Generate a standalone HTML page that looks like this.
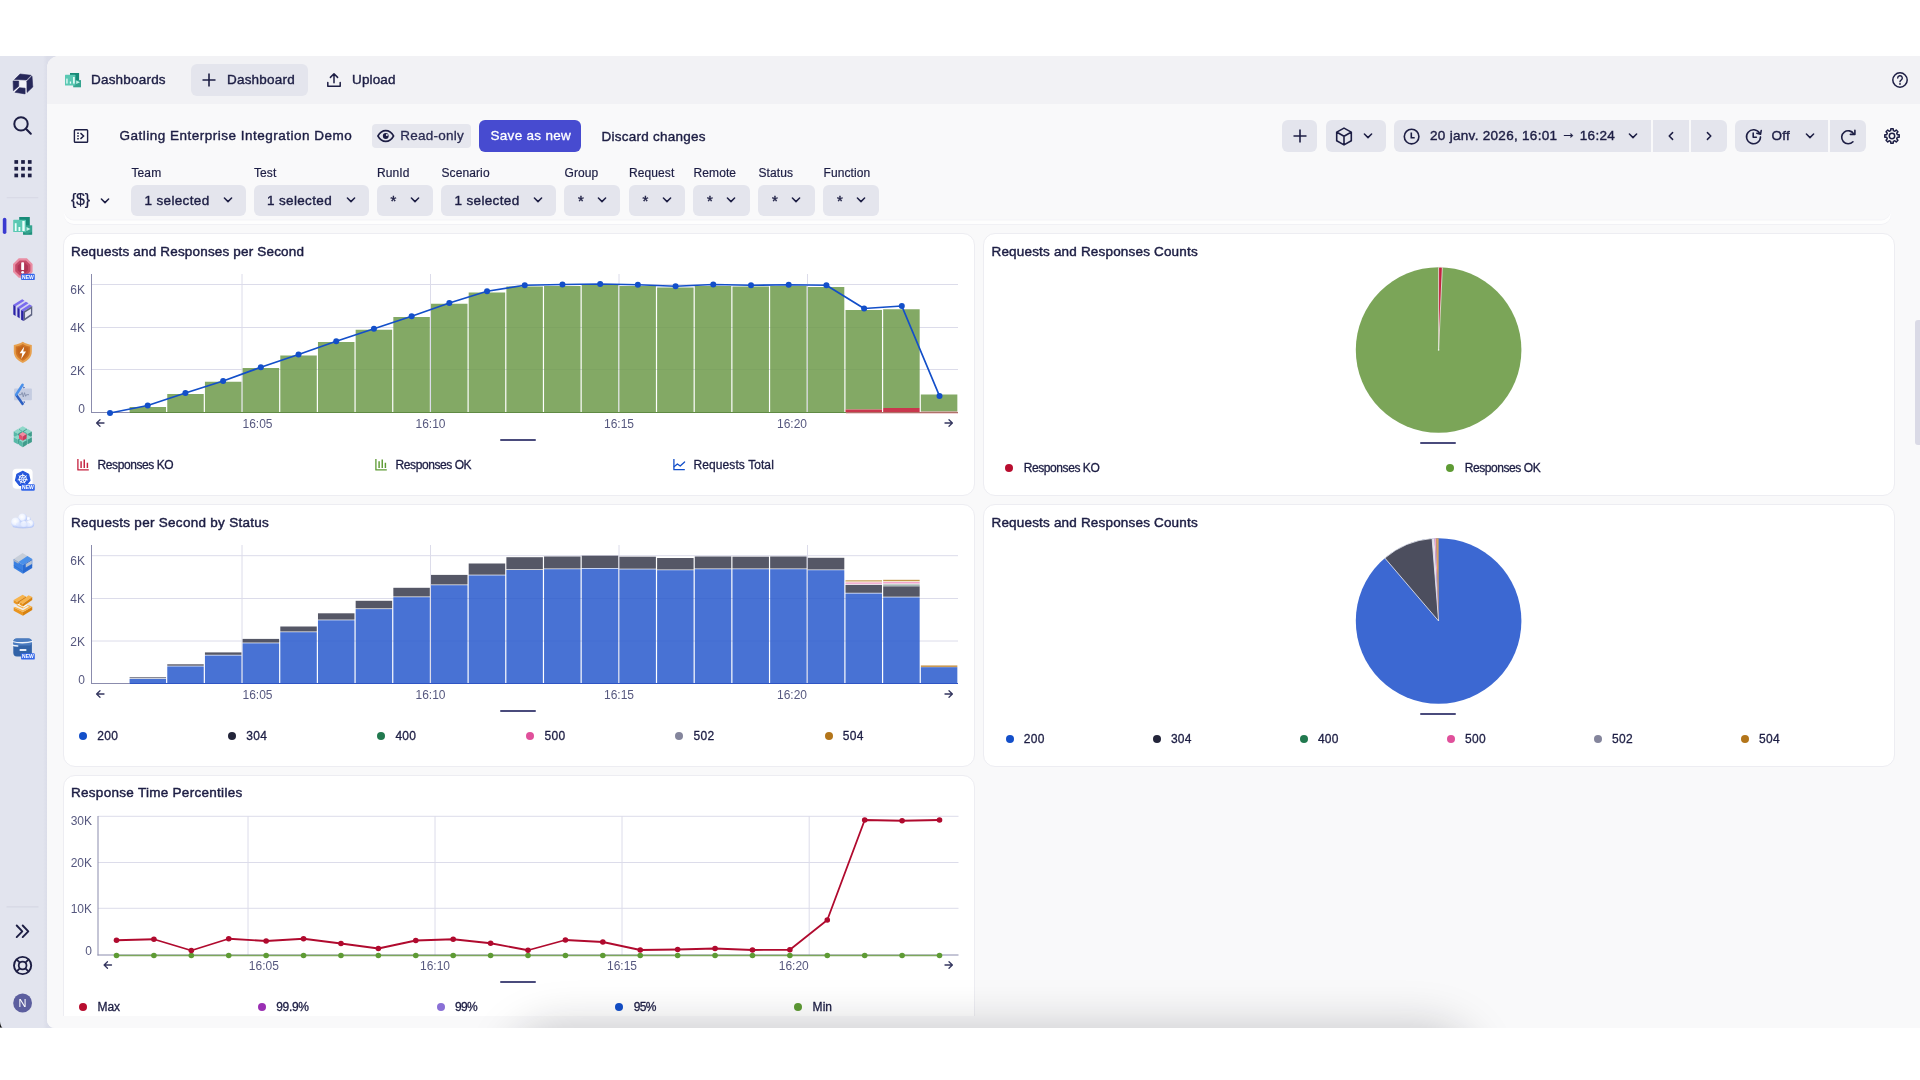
<!DOCTYPE html>
<html lang="fr"><head><meta charset="utf-8"><title>Gatling Enterprise Integration Demo - Dashboards</title>
<style>
*{box-sizing:border-box;margin:0;padding:0}
html,body{width:1920px;height:1080px;overflow:hidden;background:#fff}
body{position:relative;font-family:"Liberation Sans",sans-serif;color:#1d1e44;font-size:14px;-webkit-font-smoothing:antialiased}
.abs{position:absolute}
#app{position:absolute;left:0;top:56px;width:1920px;height:971.5px;background:linear-gradient(90deg,#e2e4ee 0,#e2e4ee 43px,#dbdde9 47px);overflow:hidden}
#main{position:absolute;left:47px;top:0;width:1873px;height:971.5px;background:#f9f9fa;border-radius:12px 0 0 8px;overflow:hidden}
#tabbar{position:absolute;left:0;top:0;width:1873px;height:48.2px;background:#f2f2f5}
.t14{position:absolute;font-size:13.5px;line-height:16px;letter-spacing:0.25px;white-space:pre;color:#1d1e44;-webkit-text-stroke:0.4px #1d1e44;margin-top:0.2px}
.t12{position:absolute;font-size:12px;line-height:14px;white-space:pre;color:#1d1e44;-webkit-text-stroke:0.2px #1d1e44}
.btn{position:absolute;background:#e4e5ed;border-radius:6px;height:32px}
.sel{position:absolute;top:184.8px;height:31.6px;background:#e4e5ed;border-radius:6px}
.card{position:absolute;background:#fff;border:1px solid #ededf2;border-radius:12px}
.ttl{position:absolute;font-weight:400;font-size:13.5px;line-height:16px;white-space:pre;color:#1d1e44;-webkit-text-stroke:0.45px #1d1e44}
.lg{position:absolute;font-size:12px;line-height:14px;white-space:pre;color:#1d1e44;-webkit-text-stroke:0.3px #1d1e44}
.dot{position:absolute;width:8px;height:8px;border-radius:50%}
.ind{position:absolute;width:36px;height:2px;background:#4a4b7c;border-radius:1px}
svg.ic{position:absolute;overflow:visible}
svg.plot{position:absolute;left:0;top:0;pointer-events:none}
#charts{position:absolute;left:0;top:0;width:1920px;height:1027px;overflow:hidden}
text.ax{font-family:"Liberation Sans",sans-serif;font-size:12px;fill:#56587f}
#root{position:absolute;left:0;top:0;width:1920px;height:1080px;overflow:hidden;will-change:transform;background:#fff}

</style></head>
<body>
<div id="root">
<div id="app">
  <div id="main">
    <div id="tabbar"></div>
  </div>
</div>

<!-- toolbar bottom edge -->
<div class="abs" style="left:64px;top:104px;width:1827px;height:120px;border-radius:0 0 10px 10px;background:#f9f9fa;box-shadow:inset 0 -3.5px 0 #fefefe, inset 0 -4.5px 0 #f4f4f7, 0 1px 0 #f1f1f5"></div>
<div class="abs" style="left:63px;top:104px;width:1832px;height:100px;background:#f9f9fa"></div>

<!-- cards -->
<div class="card" style="left:62.5px;top:233.4px;width:912px;height:262.6px"></div>
<div class="card" style="left:982.7px;top:233.4px;width:912px;height:262.6px"></div>
<div class="card" style="left:62.5px;top:504.3px;width:912px;height:262.7px"></div>
<div class="card" style="left:982.7px;top:504.3px;width:912px;height:262.7px"></div>
<div class="card" style="left:62.5px;top:774.8px;width:912px;height:262.2px"></div>

<!-- scrollbar -->
<div class="abs" style="left:1914.5px;top:320px;width:6px;height:125px;background:#dadae6;border-radius:3px 0 0 3px"></div>
<!-- ===== tab bar ===== -->
<svg class="ic" style="left:64px;top:71px" width="18" height="18" viewBox="0 0 18 18">
  <rect x="6" y="2" width="9.100" height="8.500" fill="#178a77"/>
  <rect x="9.200" y="9.100" width="7.800" height="7.200" fill="#35a48f"/>
  <rect x="1" y="3.800" width="10.400" height="10.600" rx="0.500" fill="#5ac8b3"/>
  <rect x="2.300" y="7.600" width="1.300" height="5" fill="#ecfffb"/>
  <rect x="5.800" y="10.500" width="1.300" height="2.100" fill="#ecfffb"/>
  <rect x="9.100" y="6" width="1.600" height="6.600" fill="#ecfffb"/>
  <path d="M12.200 9.500 L16 11.200 L12.200 12.900 Z" fill="#c4f1e7"/>
</svg>
<div class="t14" style="left:91px;top:72px;letter-spacing:0.20px">Dashboards</div>
<div class="btn" style="left:191px;top:64px;width:116.5px"></div>
<svg class="ic" style="left:200.7px;top:72px" width="16" height="16" viewBox="0 0 16 16"><path d="M8 1.500V14.500M1.500 8H14.500" stroke="#1d1e44" stroke-width="1.600" fill="none"/></svg>
<div class="t14" style="left:227px;top:72px;letter-spacing:0.20px">Dashboard</div>
<svg class="ic" style="left:325.5px;top:72px" width="16" height="16" viewBox="0 0 16 16"><path d="M8 10.8V2M4.4 5.4L8 1.8l3.6 3.6M1.8 10.6v3.6h12.4v-3.6" stroke="#1d1e44" stroke-width="1.5" fill="none" stroke-linecap="round" stroke-linejoin="round"/></svg>
<div class="t14" style="left:352px;top:72px;letter-spacing:0.15px">Upload</div>
<svg class="ic" style="left:1890.5px;top:71px" width="18" height="18" viewBox="0 0 18 18"><circle cx="9" cy="9" r="7.2" stroke="#1d1e44" stroke-width="1.5" fill="none"/><path d="M6.7 7.1a2.3 2.3 0 1 1 3.4 2c-.7.4-1.1.8-1.1 1.6" stroke="#1d1e44" stroke-width="1.4" fill="none" stroke-linecap="round"/><circle cx="9" cy="12.9" r="0.95" fill="#1d1e44"/></svg>

<!-- ===== toolbar row ===== -->
<svg class="ic" style="left:73px;top:127.7px" width="16" height="16" viewBox="0 0 16 16"><rect x="1.4" y="1.8" width="13.2" height="12.4" rx="0.8" stroke="#1d1e44" stroke-width="1.4" fill="none"/><path d="M5 5.2v.01M5 8v.01M5 10.8v.01" stroke="#1d1e44" stroke-width="1.6" stroke-linecap="square"/><path d="M8 5.6L10.6 8 8 10.4" stroke="#1d1e44" stroke-width="1.4" fill="none" stroke-linecap="square"/></svg>
<div class="t14" style="left:119.4px;top:128.2px;letter-spacing:0.5px">Gatling Enterprise Integration Demo</div>
<div class="abs" style="left:372px;top:124px;width:98.5px;height:24px;background:#e6e7ee;border-radius:4px"></div>
<svg class="ic" style="left:377.3px;top:128.300px" width="17.500" height="16" viewBox="0 0 17.500 16"><path d="M0.900 8C2.900 4.400 5.600 2.600 8.750 2.600S14.600 4.400 16.600 8c-2 3.600-4.700 5.400-7.850 5.400S2.900 11.600 0.900 8Z" stroke="#1d1e44" stroke-width="1.600" fill="none" stroke-linejoin="round"/><circle cx="8.750" cy="8" r="2.900" fill="#1d1e44"/><circle cx="9.900" cy="6.900" r="1" fill="#e7e7ee"/></svg>
<div class="t14" style="left:400.3px;top:128px;color:#2a2b52;-webkit-text-stroke:0.3px #2a2b52">Read-only</div>
<div class="abs" style="left:478.5px;top:120px;width:102.6px;height:32px;background:#474bd0;border-radius:6px"></div>
<div class="t14" style="left:490.5px;top:128px;color:#fff;-webkit-text-stroke:0.3px #fff;letter-spacing:0.30px">Save as new</div>
<div class="t14" style="left:601.5px;top:128.5px">Discard changes</div>

<!-- right buttons -->
<div class="btn" style="left:1281.7px;top:120px;width:35.5px"></div>
<svg class="ic" style="left:1291.5px;top:128px" width="16" height="16" viewBox="0 0 16 16"><path d="M8 1.500V14.500M1.500 8H14.500" stroke="#1d1e44" stroke-width="1.600" fill="none"/></svg>
<div class="btn" style="left:1325.5px;top:120px;width:60.5px"></div>
<svg class="ic" style="left:1334.6px;top:126.6px" width="18" height="19" viewBox="0 0 18 19"><path d="M9 1.100L16.300 5.100V13.700L9 17.900L1.700 13.700V5.100Z M2 5.300L9 9.300L16 5.300M9 9.300V17.600" stroke="#1d1e44" stroke-width="1.600" fill="none" stroke-linejoin="round"/></svg>
<svg class="ic chev" style="left:1363px;top:132px" width="10" height="8" viewBox="0 0 10 8"><path d="M1.400 2L5 5.600L8.600 2" stroke="#1d1e44" stroke-width="1.5" fill="none" stroke-linecap="round" stroke-linejoin="round"/></svg>

<div class="btn" style="left:1393.5px;top:120px;width:257.5px;border-radius:6px 0 0 6px"></div>
<svg class="ic" style="left:1403.3px;top:127.6px" width="17" height="17" viewBox="0 0 17 17"><circle cx="8.600" cy="8.600" r="7.300" stroke="#1d1e44" stroke-width="1.600" fill="none"/><path d="M8.300 4.500V9.700H11.700" stroke="#1d1e44" stroke-width="1.600" fill="none" stroke-linecap="butt" stroke-linejoin="miter"/></svg>
<div class="t14" style="left:1430px;top:128px;letter-spacing:0.30px">20 janv. 2026, 16:01 <span style="position:relative;top:-2.6px;font-size:15px;line-height:10px;-webkit-text-stroke:0.5px #1d1e44;margin:0 -0.5px">→</span> 16:24</div>
<svg class="ic chev" style="left:1628px;top:132px" width="10" height="8" viewBox="0 0 10 8"><path d="M1.400 2L5 5.600L8.600 2" stroke="#1d1e44" stroke-width="1.5" fill="none" stroke-linecap="round" stroke-linejoin="round"/></svg>
<div class="btn" style="left:1653px;top:120px;width:36px;border-radius:0"></div>
<svg class="ic" style="left:1666.5px;top:131px" width="8" height="10" viewBox="0 0 8 10"><path d="M5.600 1.600L2.200 5L5.600 8.400" stroke="#1d1e44" stroke-width="1.5" fill="none" stroke-linecap="round" stroke-linejoin="round"/></svg>
<div class="btn" style="left:1691px;top:120px;width:36px;border-radius:0 6px 6px 0"></div>
<svg class="ic" style="left:1705px;top:131px" width="8" height="10" viewBox="0 0 8 10"><path d="M2.400 1.600L5.800 5L2.400 8.400" stroke="#1d1e44" stroke-width="1.5" fill="none" stroke-linecap="round" stroke-linejoin="round"/></svg>

<div class="btn" style="left:1735px;top:120px;width:92.5px;border-radius:6px 0 0 6px"></div>
<svg class="ic" style="left:1744.5px;top:127.5px" width="17" height="17" viewBox="0 0 17 17"><path d="M14.600 5.300A7 7 0 1 0 15.500 8.900" stroke="#1d1e44" stroke-width="1.550" fill="none" stroke-linecap="round"/><path d="M16.200 2.600L15.500 6.300L11.800 5.300" stroke="#1d1e44" stroke-width="1.550" fill="none" stroke-linecap="round" stroke-linejoin="round"/><path d="M8.200 5V9.200H11.400" stroke="#1d1e44" stroke-width="1.550" fill="none" stroke-linecap="round" stroke-linejoin="round"/></svg>
<div class="t14" style="left:1771.5px;top:128px">Off</div>
<svg class="ic chev" style="left:1804.5px;top:132px" width="10" height="8" viewBox="0 0 10 8"><path d="M1.400 2L5 5.600L8.600 2" stroke="#1d1e44" stroke-width="1.5" fill="none" stroke-linecap="round" stroke-linejoin="round"/></svg>
<div class="btn" style="left:1829.5px;top:120px;width:36.500px;border-radius:0 6px 6px 0"></div>
<svg class="ic" style="left:1839.5px;top:127.5px" width="17" height="17" viewBox="0 0 17 17"><path d="M13.71 5.86A6.5 6.5 0 1 0 12.95 13.73" stroke="#1d1e44" stroke-width="1.6" fill="none" stroke-linecap="round"/><path d="M14.9 2.400V6.400H10.400" stroke="#1d1e44" stroke-width="1.600" fill="none" stroke-linecap="round" stroke-linejoin="round"/></svg>
<svg class="ic" style="left:1882.7px;top:127.2px" width="18" height="18" viewBox="0 0 18 18"><path d="M7.67 3.66 L7.80 1.80 L10.20 1.80 L10.33 3.66 L11.84 4.29 L13.24 3.06 L14.94 4.76 L13.71 6.16 L14.34 7.67 L16.20 7.80 L16.20 10.20 L14.34 10.33 L13.71 11.84 L14.94 13.24 L13.24 14.94 L11.84 13.71 L10.33 14.34 L10.20 16.20 L7.80 16.20 L7.67 14.34 L6.16 13.71 L4.76 14.94 L3.06 13.24 L4.29 11.84 L3.66 10.33 L1.80 10.20 L1.80 7.80 L3.66 7.67 L4.29 6.16 L3.06 4.76 L4.76 3.06 L6.16 4.29 Z" stroke="#1d1e44" stroke-width="1.5" fill="none" stroke-linejoin="round"/><circle cx="9" cy="9" r="2.7" stroke="#1d1e44" stroke-width="1.5" fill="none"/></svg>

<!-- ===== filters ===== -->
<div class="abs" style="left:71px;top:190px;font-size:16px;line-height:20px;color:#1d1e44;letter-spacing:-0.3px;-webkit-text-stroke:0.2px #1d1e44">{$}</div>
<svg class="ic chev" style="left:100px;top:196.500px" width="10" height="8" viewBox="0 0 10 8"><path d="M1.400 2L5 5.600L8.600 2" stroke="#1d1e44" stroke-width="1.5" fill="none" stroke-linecap="round" stroke-linejoin="round"/></svg>
<div class="t12" style="left:131.5px;top:165.5px;letter-spacing:0.1px">Team</div>
<div class="sel" style="left:131px;width:114.5px"></div>
<div class="t14" style="left:144.5px;top:192.5px;letter-spacing:0.35px">1 selected</div>
<svg class="ic chev" style="left:223px;top:196.3px" width="10" height="8" viewBox="0 0 10 8"><path d="M1.4 2L5 5.6L8.6 2" stroke="#1d1e44" stroke-width="1.5" fill="none" stroke-linecap="round" stroke-linejoin="round"/></svg>
<div class="t12" style="left:254.0px;top:165.5px;letter-spacing:0.1px">Test</div>
<div class="sel" style="left:253.5px;width:115px"></div>
<div class="t14" style="left:267.0px;top:192.5px;letter-spacing:0.35px">1 selected</div>
<svg class="ic chev" style="left:345.5px;top:196.3px" width="10" height="8" viewBox="0 0 10 8"><path d="M1.4 2L5 5.6L8.6 2" stroke="#1d1e44" stroke-width="1.5" fill="none" stroke-linecap="round" stroke-linejoin="round"/></svg>
<div class="t12" style="left:377.0px;top:165.5px;letter-spacing:0.1px">RunId</div>
<div class="sel" style="left:376.5px;width:56px"></div>
<div class="t14" style="left:390.5px;top:192.7px;font-size:15px">*</div>
<svg class="ic chev" style="left:409.5px;top:196.3px" width="10" height="8" viewBox="0 0 10 8"><path d="M1.4 2L5 5.6L8.6 2" stroke="#1d1e44" stroke-width="1.5" fill="none" stroke-linecap="round" stroke-linejoin="round"/></svg>
<div class="t12" style="left:441.5px;top:165.5px;letter-spacing:0.1px">Scenario</div>
<div class="sel" style="left:441px;width:115px"></div>
<div class="t14" style="left:454.5px;top:192.5px;letter-spacing:0.35px">1 selected</div>
<svg class="ic chev" style="left:533px;top:196.3px" width="10" height="8" viewBox="0 0 10 8"><path d="M1.4 2L5 5.6L8.6 2" stroke="#1d1e44" stroke-width="1.5" fill="none" stroke-linecap="round" stroke-linejoin="round"/></svg>
<div class="t12" style="left:564.5px;top:165.5px;letter-spacing:0.1px">Group</div>
<div class="sel" style="left:564px;width:56px"></div>
<div class="t14" style="left:578.0px;top:192.7px;font-size:15px">*</div>
<svg class="ic chev" style="left:597px;top:196.3px" width="10" height="8" viewBox="0 0 10 8"><path d="M1.4 2L5 5.6L8.6 2" stroke="#1d1e44" stroke-width="1.5" fill="none" stroke-linecap="round" stroke-linejoin="round"/></svg>
<div class="t12" style="left:629.0px;top:165.5px;letter-spacing:0.1px">Request</div>
<div class="sel" style="left:628.5px;width:56.5px"></div>
<div class="t14" style="left:642.5px;top:192.7px;font-size:15px">*</div>
<svg class="ic chev" style="left:661.5px;top:196.3px" width="10" height="8" viewBox="0 0 10 8"><path d="M1.4 2L5 5.6L8.6 2" stroke="#1d1e44" stroke-width="1.5" fill="none" stroke-linecap="round" stroke-linejoin="round"/></svg>
<div class="t12" style="left:693.5px;top:165.5px;letter-spacing:0.1px">Remote</div>
<div class="sel" style="left:693px;width:57px"></div>
<div class="t14" style="left:707.0px;top:192.7px;font-size:15px">*</div>
<svg class="ic chev" style="left:726px;top:196.3px" width="10" height="8" viewBox="0 0 10 8"><path d="M1.4 2L5 5.6L8.6 2" stroke="#1d1e44" stroke-width="1.5" fill="none" stroke-linecap="round" stroke-linejoin="round"/></svg>
<div class="t12" style="left:758.5px;top:165.5px;letter-spacing:0.1px">Status</div>
<div class="sel" style="left:758px;width:57px"></div>
<div class="t14" style="left:772.0px;top:192.7px;font-size:15px">*</div>
<svg class="ic chev" style="left:791px;top:196.3px" width="10" height="8" viewBox="0 0 10 8"><path d="M1.4 2L5 5.6L8.6 2" stroke="#1d1e44" stroke-width="1.5" fill="none" stroke-linecap="round" stroke-linejoin="round"/></svg>
<div class="t12" style="left:823.5px;top:165.5px;letter-spacing:0.1px">Function</div>
<div class="sel" style="left:823px;width:56px"></div>
<div class="t14" style="left:837.0px;top:192.7px;font-size:15px">*</div>
<svg class="ic chev" style="left:856px;top:196.3px" width="10" height="8" viewBox="0 0 10 8"><path d="M1.4 2L5 5.6L8.6 2" stroke="#1d1e44" stroke-width="1.5" fill="none" stroke-linecap="round" stroke-linejoin="round"/></svg>
<!-- ===== sidebar ===== -->
<svg class="ic" style="left:0;top:56px" width="47" height="972" viewBox="0 0 47 972">
  <defs><radialGradient id="cg" cx="0.42" cy="0.38" r="0.62"><stop offset="0" stop-color="#ffffff"/><stop offset="0.55" stop-color="#eef3ff"/><stop offset="1" stop-color="#b3c6fb"/></radialGradient></defs>
  <!-- logo -->
  <polygon points="13,24.800 20,17.700 31.500,19 33.100,31.200 25.200,38.200 14.800,36.600 13.100,34.800" fill="#f2f2f9"/>
  <g fill="#262759" stroke="#262759" stroke-width="0.600" stroke-linejoin="round">
    <path d="M14.500 23.500 L20.100 18 L31.200 19.300 L26.600 24 Z"/>
    <path d="M13.100 24.900 L18.700 25.100 L18.700 30.300 L13.400 34.700 Z"/>
    <path d="M32 20.100 L32.800 31 L27 36.500 L26.900 25.200 Z"/>
    <path d="M19.400 31.700 L25.100 32.200 L25.100 37.900 L14.900 36.300 Z"/>
  </g>
  <!-- search -->
  <circle cx="21" cy="67.900" r="6.700" stroke="#1d1e44" stroke-width="2" fill="none"/>
  <path d="M25.900 72.800 L30.800 77.700" stroke="#1d1e44" stroke-width="2.100" stroke-linecap="round"/>
  <!-- app grid -->
  <g fill="#1d1e44">
    <rect x="14.4" y="104.1" width="3.700" height="3.700"/><rect x="21.15" y="104.1" width="3.700" height="3.700"/><rect x="27.9" y="104.1" width="3.700" height="3.700"/>
    <rect x="14.4" y="110.85" width="3.700" height="3.700"/><rect x="21.15" y="110.85" width="3.700" height="3.700"/><rect x="27.9" y="110.85" width="3.700" height="3.700"/>
    <rect x="14.4" y="117.6" width="3.700" height="3.700"/><rect x="21.15" y="117.6" width="3.700" height="3.700"/><rect x="27.9" y="117.6" width="3.700" height="3.700"/>
  </g>
  <rect x="6.700" y="141.200" width="31.600" height="1" fill="#d6d7e4"/>
  <!-- active marker -->
  <rect x="2.800" y="161.700" width="3.600" height="16.300" rx="1.800" fill="#3a3ad0"/>
  <!-- dashboards app -->
  <g transform="translate(10 158)">
    <rect x="9.200" y="3" width="10.600" height="10.500" fill="#178a77"/>
    <rect x="13" y="11.300" width="9.200" height="9.400" fill="#35a48f"/>
    <path d="M13.300 18.200 C16 20.600 20 20 21.800 17.600 V20.400 H13.300 Z" fill="#1f8c79"/>
    <rect x="3.200" y="5.800" width="12.800" height="12.200" rx="0.600" fill="#5ac8b3"/>
    <rect x="4.800" y="9.200" width="1.800" height="7.800" fill="#ecfffb"/>
    <rect x="8.500" y="13" width="1.800" height="4" fill="#ecfffb"/>
    <rect x="12.300" y="7" width="2.400" height="10" fill="#ecfffb"/>
    <path d="M16.500 13 L20.500 15 L16.500 17 Z" fill="#c4f1e7"/>
  </g>
  <!-- problems (red hex + NEW) -->
  <g transform="translate(10 200)">
    <polygon points="22.60,16.06 16.86,21.80 8.74,21.80 3.00,16.06 3.00,7.94 8.74,2.20 16.86,2.20 22.60,7.94" fill="#e98da3"/>
    <polygon points="20.40,15.15 15.95,19.60 9.65,19.60 5.20,15.15 5.20,8.85 9.65,4.40 15.95,4.40 20.40,8.85" fill="#c54a68"/>
    <polygon points="18.00,14.15 14.95,17.20 10.65,17.20 7.60,14.15 7.60,9.85 10.65,6.80 14.95,6.80 18.00,9.85" fill="#b03455"/>
    <rect x="11.200" y="6.200" width="2.900" height="7.900" rx="0.900" fill="#fff"/><circle cx="12.650" cy="16.300" r="1.400" fill="#fff"/>
    <rect x="11.100" y="17.700" width="13.700" height="6.400" rx="1.200" fill="#3567ea"/>
    <text x="17.950" y="22.800" font-size="5" font-weight="700" font-family="Liberation Sans, sans-serif" fill="#fff" text-anchor="middle">NEW</text>
  </g>
  <!-- purple box -->
  <g transform="translate(10 242)">
    <polygon points="3.33,6.81 12.22,1.26 22.22,7.93 22.22,17.19 13.70,23.11 3.33,16.44" fill="#d5d4ee"/>
    <polygon points="3.33,6.81 12.22,1.26 14.44,2.74 5.56,8.30" fill="#7a6bee"/>
    <polygon points="3.33,6.81 5.56,8.30 5.56,17.93 3.33,16.44" fill="#2a22a6"/>
    <polygon points="7.41,9.41 15.93,3.85 18.52,5.33 9.63,10.89" fill="#7a6bee"/>
    <polygon points="7.41,9.41 9.63,10.89 9.63,20.15 7.41,18.67" fill="#2a22a6"/>
    <polygon points="11.11,12.00 19.63,6.44 22.22,7.93 13.70,13.48" fill="#7a6bee"/>
    <polygon points="11.11,12.00 13.70,13.48 13.70,23.11 11.11,21.63" fill="#2a22a6"/>
    <polygon points="13.70,13.48 22.22,7.93 22.22,17.19 13.70,23.11" fill="#5d6380"/>
    <polygon points="15.04,14.59 20.96,10.74 20.96,16.07 15.04,20.15" fill="#e6e6f1"/>
  </g>
  <!-- shield -->
  <g transform="translate(10 285)">
    <path d="M12.800 0.800 C10 2.600 7 3.600 3.800 3.900 V10.500 C3.800 16 7.600 19.600 12.800 21.900 C18 19.600 21.800 16 21.800 10.500 V3.900 C18.600 3.600 15.600 2.600 12.800 0.800 Z" fill="#e7a04e"/>
    <path d="M12.800 3 C10.500 4.400 8.200 5.200 5.700 5.500 V10.600 C5.700 15 8.700 17.900 12.800 19.800 C16.900 17.900 19.900 15 19.900 10.600 V5.500 C17.400 5.200 15.100 4.400 12.800 3 Z" fill="#cf7426"/>
    <path d="M12.800 4.800 C11 5.800 9.300 6.400 7.400 6.700 V10.600 C7.400 14 9.700 16.300 12.800 17.900 C15.900 16.300 18.200 14 18.200 10.600 V6.700 C16.300 6.400 14.600 5.800 12.800 4.800 Z" fill="#c4661c"/>
    <path d="M14.300 5.600 L9.600 12.200 H12.300 L11.200 17.900 L16 10.400 H13.200 Z" fill="#fff"/>
  </g>
  <!-- tracing -->
  <g transform="translate(10 327)">
    <rect x="4.100" y="5.400" width="17.800" height="11.900" rx="0.800" fill="#c2cae0" opacity="0.920"/>
    <path d="M9 11.700 H11.200 L12.100 9.500 L13.300 13.900 L14.500 9.700 L15.700 13.300 L16.500 11.700 H19" stroke="#7a86a6" stroke-width="0.800" fill="none"/>
    <path d="M6.100 11.700 L13.200 21.700" stroke="#2b5fc2" stroke-width="2.500" fill="none"/>
    <path d="M12.600 1.700 L6.100 11.700" stroke="#4a90ea" stroke-width="2.500" fill="none" stroke-linecap="round"/>
    <path d="M13.100 3.400 L15 4.400 L13.600 5.400 Z M13.700 18 L15.200 19 L13.800 20.200 Z" fill="#2450b0"/>
  </g>
  <!-- cube of cubes -->
  <g transform="translate(10 369)">
    <polygon points="12.80,1.20 16.87,3.55 12.80,5.90 8.73,3.55" fill="#8fd8c9"/><polygon points="8.73,3.55 12.80,5.90 12.80,10.60 8.73,8.25" fill="#56b9a7"/><polygon points="12.80,5.90 16.87,3.55 16.87,8.25 12.80,10.60" fill="#3f9c8b"/>
    <polygon points="7.78,4.10 11.85,6.45 7.78,8.80 3.71,6.45" fill="#8fd8c9"/><polygon points="3.71,6.45 7.78,8.80 7.78,13.50 3.71,11.15" fill="#56b9a7"/><polygon points="7.78,8.80 11.85,6.45 11.85,11.15 7.78,13.50" fill="#3f9c8b"/>
    <polygon points="17.82,4.10 21.89,6.45 17.82,8.80 13.75,6.45" fill="#8fd8c9"/><polygon points="13.75,6.45 17.82,8.80 17.82,13.50 13.75,11.15" fill="#56b9a7"/><polygon points="17.82,8.80 21.89,6.45 21.89,11.15 17.82,13.50" fill="#3f9c8b"/>
    <polygon points="7.78,9.90 11.85,12.25 7.78,14.60 3.71,12.25" fill="#8fd8c9"/><polygon points="3.71,12.25 7.78,14.60 7.78,19.30 3.71,16.95" fill="#56b9a7"/><polygon points="7.78,14.60 11.85,12.25 11.85,16.95 7.78,19.30" fill="#3f9c8b"/>
    <polygon points="17.82,9.90 21.89,12.25 17.82,14.60 13.75,12.25" fill="#8fd8c9"/><polygon points="13.75,12.25 17.82,14.60 17.82,19.30 13.75,16.95" fill="#56b9a7"/><polygon points="17.82,14.60 21.89,12.25 21.89,16.95 17.82,19.30" fill="#3f9c8b"/>
    <polygon points="12.80,12.80 16.87,15.15 12.80,17.50 8.73,15.15" fill="#8fd8c9"/><polygon points="8.73,15.15 12.80,17.50 12.80,22.20 8.73,19.85" fill="#56b9a7"/><polygon points="12.80,17.50 16.87,15.15 16.87,19.85 12.80,22.20" fill="#3f9c8b"/>
    <polygon points="12.80,7.00 16.61,9.20 12.80,11.40 8.99,9.20" fill="#f58ba2"/><polygon points="8.99,9.20 12.80,11.40 12.80,15.80 8.99,13.60" fill="#e2506f"/><polygon points="12.80,11.40 16.61,9.20 16.61,13.60 12.80,15.80" fill="#c93b5b"/>
  </g>
  <!-- kubernetes -->
  <g transform="translate(10 411)">
    <rect x="2.600" y="1.700" width="20" height="20" rx="3.800" fill="#fff"/>
    <polygon points="12.75,4.40 18.54,7.19 19.96,13.45 15.96,18.47 9.54,18.47 5.54,13.45 6.96,7.19" fill="#2456dc" stroke="#2456dc" stroke-width="1.200" stroke-linejoin="round"/>
    <circle cx="12.75" cy="11.80" r="3.600" stroke="#fff" stroke-width="1" fill="none"/>
    <path d="M12.75 11.80 L12.75 6.60 M12.75 11.80 L16.82 8.56 M12.75 11.80 L17.82 12.96 M12.75 11.80 L15.01 16.49 M12.75 11.80 L10.49 16.49 M12.75 11.80 L7.68 12.96 M12.75 11.80 L8.68 8.56" stroke="#fff" stroke-width="0.900" fill="none"/>
    <circle cx="12.75" cy="11.80" r="1.100" fill="#2456dc" stroke="#fff" stroke-width="0.700"/>
    <rect x="11.100" y="17.300" width="13.700" height="6.400" rx="1.200" fill="#3567ea"/>
    <text x="17.950" y="22.400" font-size="5" font-weight="700" font-family="Liberation Sans, sans-serif" fill="#fff" text-anchor="middle">NEW</text>
  </g>
  <!-- clouds -->
  <g transform="translate(10 454)">
    <ellipse cx="13" cy="16.600" rx="10.500" ry="1.800" fill="#9fb7f5" opacity="0.550"/>
    <circle cx="18.500" cy="9" r="2.200" fill="url(#cg)"/>
    <circle cx="12.600" cy="7.900" r="4.500" fill="url(#cg)"/>
    <circle cx="20.400" cy="13.800" r="3.800" fill="url(#cg)"/>
    <circle cx="5.900" cy="12.300" r="4.900" fill="url(#cg)"/>
    <circle cx="14.100" cy="14.400" r="3.300" fill="url(#cg)"/>
    <rect x="6" y="12.500" width="14.500" height="4.300" rx="2" fill="#dfe8ff" opacity="0.700"/>
  </g>
  <!-- infrastructure cube -->
  <g transform="translate(10 496)">
    <polygon points="3.70,7.04 12.59,1.11 22.22,7.04 12.96,12.96" fill="#c7ced9"/>
    <polygon points="17.41,4.07 22.22,7.04 12.96,12.96 8.52,10.00" fill="#4a90ea"/>
    <polygon points="3.70,7.04 12.96,12.96 12.96,21.85 3.70,15.93" fill="#3a80e2"/>
    <polygon points="12.96,12.96 22.22,7.04 22.22,15.93 12.96,21.85" fill="#2a6cd4"/>
    <polygon points="3.70,7.04 8.52,10.00 8.52,11.85 3.70,9.04" fill="#aab4c4"/>
    <polygon points="15.78,12.07 21.85,8.37 21.85,12.07 15.78,15.56" fill="#b9c3d2"/>
    <polygon points="3.70,12.96 12.96,18.89 22.22,12.96 22.22,13.85 12.96,19.78 3.70,13.85" fill="#245fc0" opacity="0.550"/>
  </g>
  <!-- orange layers -->
  <g transform="translate(10 538)">
    <polygon points="3.70,13.48 12.96,17.93 12.96,21.63 3.70,16.81" fill="#ea951f"/>
    <polygon points="12.96,17.93 22.22,12.74 22.22,16.07 12.96,21.63" fill="#d8820f"/>
    <polygon points="3.70,13.48 8.89,10.52 18.52,11.11 22.22,12.74 12.96,17.93" fill="#f7b44e"/>
    <polygon points="3.70,10.15 12.96,14.59 18.52,11.41 18.52,13.11 12.96,16.30 3.70,12.15" fill="#efeeee"/>
    <polygon points="4.81,9.41 13.70,13.48 17.78,11.11 9.26,7.19" fill="#fbfbfb"/>
    <polygon points="9.63,7.93 18.52,1.26 22.22,3.11 12.96,9.78" fill="#f7b44e"/>
    <polygon points="9.63,7.93 12.96,9.78 12.96,12.59 9.63,10.67" fill="#ea951f"/>
    <polygon points="12.96,9.78 22.22,3.11 22.22,6.07 12.96,12.59" fill="#d8820f"/>
    <polygon points="3.70,6.07 12.59,0.74 15.93,2.59 7.19,7.93" fill="#f7b44e"/>
    <polygon points="3.70,6.07 7.19,7.93 7.19,10.67 3.70,8.74" fill="#ea951f"/>
    <polygon points="7.19,7.93 15.93,2.59 15.93,3.85 9.63,7.93 9.63,9.19 7.19,10.67" fill="#d8820f"/>
  </g>
  <!-- db/service (NEW) -->
  <g transform="translate(10 581)">
    <rect x="3.300" y="1.600" width="18.600" height="17.800" rx="3.600" fill="#3263a8"/>
    <rect x="3.300" y="1.600" width="18.600" height="7" rx="3.400" fill="#4b7cc0"/>
    <path d="M2.300 4.500 C8 6.200 17 6.200 22.600 4.300" stroke="#eef3fb" stroke-width="1.300" fill="none" stroke-linecap="round"/>
    <path d="M2.400 8.200 C4 8.800 6 9 7.800 9" stroke="#eef3fb" stroke-width="1.300" fill="none" stroke-linecap="round"/>
    <rect x="9.600" y="12" width="6.800" height="1.900" rx="0.500" fill="#e6edf8"/>
    <rect x="11.100" y="16.200" width="13.700" height="6.400" rx="1.200" fill="#3567ea"/>
    <text x="17.950" y="21.300" font-size="5" font-weight="700" font-family="Liberation Sans, sans-serif" fill="#fff" text-anchor="middle">NEW</text>
  </g>
  <!-- bottom -->
  <rect x="6.500" y="850.400" width="32" height="1" fill="#d3d4e2"/>
  <path d="M16.700 869.500 L22.300 875.300 L16.700 881.100 M22.700 869.500 L28.300 875.300 L22.700 881.100" stroke="#1d1e44" stroke-width="1.900" fill="none" stroke-linecap="round" stroke-linejoin="round"/>
  <circle cx="22.600" cy="909.500" r="8.600" stroke="#1d1e44" stroke-width="1.900" fill="none"/>
  <circle cx="22.600" cy="909.500" r="3.900" stroke="#1d1e44" stroke-width="1.800" fill="none"/>
  <path d="M16.500 903.400 L19.800 906.700 M28.700 903.400 L25.400 906.700 M16.500 915.600 L19.800 912.300 M28.700 915.600 L25.400 912.300" stroke="#1d1e44" stroke-width="1.800"/>
  <circle cx="22.600" cy="947" r="9.400" fill="#5c5e9e"/>
  <text x="22.600" y="951" font-size="11" font-family="Liberation Sans, sans-serif" fill="#fff" text-anchor="middle">N</text>
  <!-- screen corner -->
  <path d="M0 965.500 C0.200 968.500 1 970.700 2.500 971.500 H0 Z" fill="#111"/>
</svg>
<!-- ===== card titles / legends ===== -->
<h2 class="ttl" style="left:71px;top:243.5px;letter-spacing:0.175px">Requests and Responses per Second</h2>
<h2 class="ttl" style="left:991.5px;top:243.5px;letter-spacing:0.18px">Requests and Responses Counts</h2>
<h2 class="ttl" style="left:71px;top:514.7px;letter-spacing:0.286px">Requests per Second by Status</h2>
<h2 class="ttl" style="left:991.5px;top:514.7px;letter-spacing:0.18px">Requests and Responses Counts</h2>
<h2 class="ttl" style="left:71px;top:785.3px;letter-spacing:0.288px">Response Time Percentiles</h2>
<div class="ind" style="left:500px;top:438.5px"></div>
<div class="ind" style="left:1420.3px;top:442px"></div>
<div class="ind" style="left:500px;top:709.5px"></div>
<div class="ind" style="left:1420.3px;top:713px"></div>
<div class="ind" style="left:500px;top:980.5px"></div>
<svg class="ic" style="left:77px;top:459px" width="12" height="12" viewBox="0 0 12 12"><path d="M0.900 0V10.900H11.800" stroke="#c5213f" stroke-width="1.300" fill="none" stroke-linejoin="round"/><path d="M4.100 2.300V8.900M7.250 0.400V8.900M10.400 3.800V8.900" stroke="#c5213f" stroke-width="1.450" fill="none"/></svg>
<div class="lg" style="left:97.6px;top:457.8px;letter-spacing:-0.43px">Responses KO</div>
<svg class="ic" style="left:375px;top:459px" width="12" height="12" viewBox="0 0 12 12"><path d="M0.900 0V10.900H11.800" stroke="#5e9b34" stroke-width="1.300" fill="none" stroke-linejoin="round"/><path d="M4.100 2.300V8.900M7.250 0.400V8.900M10.400 3.800V8.900" stroke="#5e9b34" stroke-width="1.450" fill="none"/></svg>
<div class="lg" style="left:395.6px;top:457.8px;letter-spacing:-0.43px">Responses OK</div>
<svg class="ic" style="left:673px;top:459px" width="12" height="12" viewBox="0 0 12 12"><path d="M0.900 0V10.700H11.800" stroke="#134fc9" stroke-width="1.300" fill="none" stroke-linejoin="round"/><path d="M1.300 7.600L4.400 5L7.200 7L11.600 2.900" stroke="#134fc9" stroke-width="1.300" fill="none" stroke-linejoin="round" stroke-linecap="round"/></svg>
<div class="lg" style="left:693.6px;top:457.8px;letter-spacing:0.08px">Requests Total</div>
<div class="dot" style="left:79.0px;top:732px;background:#134fc9"></div>
<div class="lg" style="left:97.2px;top:728.7px;letter-spacing:0.3px">200</div>
<div class="dot" style="left:1005.9px;top:735.4px;background:#134fc9"></div>
<div class="lg" style="left:1023.8px;top:732px;letter-spacing:0.3px">200</div>
<div class="dot" style="left:228.1px;top:732px;background:#23253a"></div>
<div class="lg" style="left:246.3px;top:728.7px;letter-spacing:0.3px">304</div>
<div class="dot" style="left:1152.96px;top:735.4px;background:#23253a"></div>
<div class="lg" style="left:1170.9px;top:732px;letter-spacing:0.3px">304</div>
<div class="dot" style="left:377.2px;top:732px;background:#21794f"></div>
<div class="lg" style="left:395.4px;top:728.7px;letter-spacing:0.3px">400</div>
<div class="dot" style="left:1300.02px;top:735.4px;background:#21794f"></div>
<div class="lg" style="left:1317.9px;top:732px;letter-spacing:0.3px">400</div>
<div class="dot" style="left:526.3px;top:732px;background:#e0509b"></div>
<div class="lg" style="left:544.5px;top:728.7px;letter-spacing:0.3px">500</div>
<div class="dot" style="left:1447.08px;top:735.4px;background:#e0509b"></div>
<div class="lg" style="left:1465.0px;top:732px;letter-spacing:0.3px">500</div>
<div class="dot" style="left:675.4px;top:732px;background:#84859c"></div>
<div class="lg" style="left:693.6px;top:728.7px;letter-spacing:0.3px">502</div>
<div class="dot" style="left:1594.1399999999999px;top:735.4px;background:#84859c"></div>
<div class="lg" style="left:1612.0px;top:732px;letter-spacing:0.3px">502</div>
<div class="dot" style="left:824.5px;top:732px;background:#b3751a"></div>
<div class="lg" style="left:842.7px;top:728.7px;letter-spacing:0.3px">504</div>
<div class="dot" style="left:1741.1999999999998px;top:735.4px;background:#b3751a"></div>
<div class="lg" style="left:1759.1px;top:732px;letter-spacing:0.3px">504</div>
<div class="dot" style="left:1005.3px;top:464.2px;background:#b80d2f"></div>
<div class="lg" style="left:1023.8px;top:461.1px;letter-spacing:-0.43px">Responses KO</div>
<div class="dot" style="left:1446.3px;top:464.2px;background:#5e9b34"></div>
<div class="lg" style="left:1464.7px;top:461.1px;letter-spacing:-0.43px">Responses OK</div>
<div class="dot" style="left:79.0px;top:1002.5px;background:#b80d2f"></div>
<div class="lg" style="left:97.4px;top:1000.1px;letter-spacing:0px">Max</div>
<div class="dot" style="left:257.8px;top:1002.5px;background:#9a2fb3"></div>
<div class="lg" style="left:276.2px;top:1000.1px;letter-spacing:-0.3px">99.9%</div>
<div class="dot" style="left:436.6px;top:1002.5px;background:#8a70d6"></div>
<div class="lg" style="left:455.0px;top:1000.1px;letter-spacing:-0.67px">99%</div>
<div class="dot" style="left:615.4000000000001px;top:1002.5px;background:#134fc9"></div>
<div class="lg" style="left:633.8px;top:1000.1px;letter-spacing:-0.67px">95%</div>
<div class="dot" style="left:794.2px;top:1002.5px;background:#5e9b34"></div>
<div class="lg" style="left:812.6px;top:1000.1px;letter-spacing:0.05px">Min</div>
<div id="charts">
<svg class="plot" width="1920" height="1080" viewBox="0 0 1920 1080">
<line x1="91.5" x2="958" y1="284.5" y2="284.5" stroke="#dcdcea" stroke-width="1"/>
<line x1="91.5" x2="958" y1="327.5" y2="327.5" stroke="#dcdcea" stroke-width="1"/>
<line x1="91.5" x2="958" y1="369.5" y2="369.5" stroke="#dcdcea" stroke-width="1"/>
<line x1="242" x2="242" y1="274" y2="412.5" stroke="#dcdcea" stroke-width="1"/>
<line x1="430.5" x2="430.5" y1="274" y2="412.5" stroke="#dcdcea" stroke-width="1"/>
<line x1="619" x2="619" y1="274" y2="412.5" stroke="#dcdcea" stroke-width="1"/>
<line x1="807.5" x2="807.5" y1="274" y2="412.5" stroke="#dcdcea" stroke-width="1"/>
<line x1="91.5" x2="91.5" y1="274" y2="413" stroke="#8b8cad" stroke-width="1"/>
<line x1="91" x2="958" y1="412.5" y2="412.5" stroke="#8b8cad" stroke-width="1"/>
<text x="85" y="293.5" text-anchor="end" class="ax">6K</text>
<text x="85" y="331.5" text-anchor="end" class="ax">4K</text>
<text x="85" y="374.5" text-anchor="end" class="ax">2K</text>
<text x="85" y="412.5" text-anchor="end" class="ax">0</text>
<text x="242.5" y="427.5" text-anchor="start" class="ax">16:05</text>
<text x="430.5" y="427.5" text-anchor="middle" class="ax">16:10</text>
<text x="619" y="427.5" text-anchor="middle" class="ax">16:15</text>
<text x="807" y="427.5" text-anchor="end" class="ax">16:20</text>
<path d="M100 419.8 L96.6 423 L100 426.2 M96.8 423 H104" fill="none" stroke="#34365f" stroke-width="1.3" stroke-linecap="round" stroke-linejoin="round"/>
<path d="M949 419.8 L952.4 423 L949 426.2 M952.2 423 H945" fill="none" stroke="#34365f" stroke-width="1.3" stroke-linecap="round" stroke-linejoin="round"/>
<rect x="129.58" y="407" width="36.48" height="5.5" fill="#6d9a4a" fill-opacity="0.85"/>
<rect x="167.26" y="394" width="36.48" height="18.5" fill="#6d9a4a" fill-opacity="0.85"/>
<rect x="204.94" y="381.75" width="36.48" height="30.75" fill="#6d9a4a" fill-opacity="0.85"/>
<rect x="242.62" y="368" width="36.48" height="44.5" fill="#6d9a4a" fill-opacity="0.85"/>
<rect x="280.3" y="355.5" width="36.48" height="57" fill="#6d9a4a" fill-opacity="0.85"/>
<rect x="317.98" y="342" width="36.48" height="70.5" fill="#6d9a4a" fill-opacity="0.85"/>
<rect x="355.66" y="329.75" width="36.48" height="82.75" fill="#6d9a4a" fill-opacity="0.85"/>
<rect x="393.34" y="317" width="36.48" height="95.5" fill="#6d9a4a" fill-opacity="0.85"/>
<rect x="431.02" y="303.75" width="36.48" height="108.75" fill="#6d9a4a" fill-opacity="0.85"/>
<rect x="468.7" y="292.5" width="36.48" height="120" fill="#6d9a4a" fill-opacity="0.85"/>
<rect x="506.38" y="286.5" width="36.48" height="126" fill="#6d9a4a" fill-opacity="0.85"/>
<rect x="544.06" y="286" width="36.48" height="126.5" fill="#6d9a4a" fill-opacity="0.85"/>
<rect x="581.74" y="285" width="36.48" height="127.5" fill="#6d9a4a" fill-opacity="0.85"/>
<rect x="619.42" y="286" width="36.48" height="126.5" fill="#6d9a4a" fill-opacity="0.85"/>
<rect x="657.1" y="287.5" width="36.48" height="125" fill="#6d9a4a" fill-opacity="0.85"/>
<rect x="694.78" y="286" width="36.48" height="126.5" fill="#6d9a4a" fill-opacity="0.85"/>
<rect x="732.46" y="286.5" width="36.48" height="126" fill="#6d9a4a" fill-opacity="0.85"/>
<rect x="770.14" y="286" width="36.48" height="126.5" fill="#6d9a4a" fill-opacity="0.85"/>
<rect x="807.82" y="287" width="36.48" height="125.5" fill="#6d9a4a" fill-opacity="0.85"/>
<rect x="845.5" y="310" width="36.48" height="99.5" fill="#6d9a4a" fill-opacity="0.85"/>
<rect x="845.5" y="409.5" width="36.48" height="3" fill="#c9374d"/>
<rect x="883.18" y="309.25" width="36.48" height="98.75" fill="#6d9a4a" fill-opacity="0.85"/>
<rect x="883.18" y="408" width="36.48" height="4.5" fill="#c9374d"/>
<rect x="920.86" y="394.5" width="36.48" height="17.1" fill="#6d9a4a" fill-opacity="0.85"/>
<rect x="920.86" y="411.6" width="36.48" height="0.9" fill="#dc8a98"/>
<line x1="130" x2="958" y1="412.5" y2="412.5" stroke="#5f8a43" stroke-width="1"/>
<line x1="846" x2="958" y1="412.8" y2="412.8" stroke="#d0697a" stroke-width="1"/>
<polyline fill="none" stroke="#134fc9" stroke-width="1.75" stroke-linejoin="round" points="110,413 147.7,405.5 185.41,393 223.12,381 260.82,367.25 298.52,354.5 336.23,341.25 373.94,328.75 411.64,316.25 449.34,303 487.05,291.25 524.75,285.25 562.46,284.5 600.16,284 637.87,284.75 675.57,286.25 713.28,284.5 750.99,285.25 788.69,284.75 826.39,285.25 864.1,308.5 901.8,306 939.51,396"/>
<circle cx="110" cy="413" r="3" fill="#134fc9"/>
<circle cx="147.7" cy="405.5" r="3" fill="#134fc9"/>
<circle cx="185.41" cy="393" r="3" fill="#134fc9"/>
<circle cx="223.12" cy="381" r="3" fill="#134fc9"/>
<circle cx="260.82" cy="367.25" r="3" fill="#134fc9"/>
<circle cx="298.52" cy="354.5" r="3" fill="#134fc9"/>
<circle cx="336.23" cy="341.25" r="3" fill="#134fc9"/>
<circle cx="373.94" cy="328.75" r="3" fill="#134fc9"/>
<circle cx="411.64" cy="316.25" r="3" fill="#134fc9"/>
<circle cx="449.34" cy="303" r="3" fill="#134fc9"/>
<circle cx="487.05" cy="291.25" r="3" fill="#134fc9"/>
<circle cx="524.75" cy="285.25" r="3" fill="#134fc9"/>
<circle cx="562.46" cy="284.5" r="3" fill="#134fc9"/>
<circle cx="600.16" cy="284" r="3" fill="#134fc9"/>
<circle cx="637.87" cy="284.75" r="3" fill="#134fc9"/>
<circle cx="675.57" cy="286.25" r="3" fill="#134fc9"/>
<circle cx="713.28" cy="284.5" r="3" fill="#134fc9"/>
<circle cx="750.99" cy="285.25" r="3" fill="#134fc9"/>
<circle cx="788.69" cy="284.75" r="3" fill="#134fc9"/>
<circle cx="826.39" cy="285.25" r="3" fill="#134fc9"/>
<circle cx="864.1" cy="308.5" r="3" fill="#134fc9"/>
<circle cx="901.8" cy="306" r="3" fill="#134fc9"/>
<circle cx="939.51" cy="396" r="3" fill="#134fc9"/>
</svg>
<svg class="plot" width="1920" height="1080" viewBox="0 0 1920 1080">
<line x1="91.5" x2="958" y1="555.7" y2="555.7" stroke="#dcdcea" stroke-width="1"/>
<line x1="91.5" x2="958" y1="598.5" y2="598.5" stroke="#dcdcea" stroke-width="1"/>
<line x1="91.5" x2="958" y1="641" y2="641" stroke="#dcdcea" stroke-width="1"/>
<line x1="242" x2="242" y1="545" y2="683.5" stroke="#dcdcea" stroke-width="1"/>
<line x1="430.5" x2="430.5" y1="545" y2="683.5" stroke="#dcdcea" stroke-width="1"/>
<line x1="619" x2="619" y1="545" y2="683.5" stroke="#dcdcea" stroke-width="1"/>
<line x1="807.5" x2="807.5" y1="545" y2="683.5" stroke="#dcdcea" stroke-width="1"/>
<line x1="91.5" x2="91.5" y1="545" y2="684" stroke="#8b8cad" stroke-width="1"/>
<line x1="91" x2="958" y1="683.5" y2="683.5" stroke="#8b8cad" stroke-width="1"/>
<text x="85" y="564.5" text-anchor="end" class="ax">6K</text>
<text x="85" y="602.5" text-anchor="end" class="ax">4K</text>
<text x="85" y="645.5" text-anchor="end" class="ax">2K</text>
<text x="85" y="683.5" text-anchor="end" class="ax">0</text>
<text x="242.5" y="698.5" text-anchor="start" class="ax">16:05</text>
<text x="430.5" y="698.5" text-anchor="middle" class="ax">16:10</text>
<text x="619" y="698.5" text-anchor="middle" class="ax">16:15</text>
<text x="807" y="698.5" text-anchor="end" class="ax">16:20</text>
<path d="M100 690.8 L96.6 694 L100 697.2 M96.8 694 H104" fill="none" stroke="#34365f" stroke-width="1.3" stroke-linecap="round" stroke-linejoin="round"/>
<path d="M949 690.8 L952.4 694 L949 697.2 M952.2 694 H945" fill="none" stroke="#34365f" stroke-width="1.3" stroke-linecap="round" stroke-linejoin="round"/>
<rect x="129.58" y="677.3" width="36.48" height="0.9" fill="#373a4b" fill-opacity="0.85"/>
<rect x="129.58" y="678.9" width="36.48" height="4.6" fill="#2859cc" fill-opacity="0.85"/>
<rect x="167.26" y="664.3" width="36.48" height="1.4" fill="#373a4b" fill-opacity="0.85"/>
<rect x="167.26" y="666.4" width="36.48" height="17.1" fill="#2859cc" fill-opacity="0.85"/>
<rect x="204.94" y="652.4" width="36.48" height="2.4" fill="#373a4b" fill-opacity="0.85"/>
<rect x="204.94" y="655.5" width="36.48" height="28" fill="#2859cc" fill-opacity="0.85"/>
<rect x="242.62" y="638.9" width="36.48" height="3.7" fill="#373a4b" fill-opacity="0.85"/>
<rect x="242.62" y="643.3" width="36.48" height="40.2" fill="#2859cc" fill-opacity="0.85"/>
<rect x="280.3" y="626.5" width="36.48" height="5" fill="#373a4b" fill-opacity="0.85"/>
<rect x="280.3" y="632.2" width="36.48" height="51.3" fill="#2859cc" fill-opacity="0.85"/>
<rect x="317.98" y="613.3" width="36.48" height="6.3" fill="#373a4b" fill-opacity="0.85"/>
<rect x="317.98" y="620.3" width="36.48" height="63.2" fill="#2859cc" fill-opacity="0.85"/>
<rect x="355.66" y="600.8" width="36.48" height="7.6" fill="#373a4b" fill-opacity="0.85"/>
<rect x="355.66" y="609.1" width="36.48" height="74.4" fill="#2859cc" fill-opacity="0.85"/>
<rect x="393.34" y="587.8" width="36.48" height="8.7" fill="#373a4b" fill-opacity="0.85"/>
<rect x="393.34" y="597.2" width="36.48" height="86.3" fill="#2859cc" fill-opacity="0.85"/>
<rect x="431.02" y="574.9" width="36.48" height="9.6" fill="#373a4b" fill-opacity="0.85"/>
<rect x="431.02" y="585.2" width="36.48" height="98.3" fill="#2859cc" fill-opacity="0.85"/>
<rect x="468.7" y="563.5" width="36.48" height="11.2" fill="#373a4b" fill-opacity="0.85"/>
<rect x="468.7" y="575.4" width="36.48" height="108.1" fill="#2859cc" fill-opacity="0.85"/>
<rect x="506.38" y="557.2" width="36.48" height="12.1" fill="#373a4b" fill-opacity="0.85"/>
<rect x="506.38" y="570" width="36.48" height="113.5" fill="#2859cc" fill-opacity="0.85"/>
<rect x="544.06" y="556.5" width="36.48" height="12" fill="#373a4b" fill-opacity="0.85"/>
<rect x="544.06" y="569.2" width="36.48" height="114.3" fill="#2859cc" fill-opacity="0.85"/>
<rect x="581.74" y="555.7" width="36.48" height="12.3" fill="#373a4b" fill-opacity="0.85"/>
<rect x="581.74" y="568.7" width="36.48" height="114.8" fill="#2859cc" fill-opacity="0.85"/>
<rect x="619.42" y="556.7" width="36.48" height="12" fill="#373a4b" fill-opacity="0.85"/>
<rect x="619.42" y="569.4" width="36.48" height="114.1" fill="#2859cc" fill-opacity="0.85"/>
<rect x="657.1" y="558" width="36.48" height="11.5" fill="#373a4b" fill-opacity="0.85"/>
<rect x="657.1" y="570.2" width="36.48" height="113.3" fill="#2859cc" fill-opacity="0.85"/>
<rect x="694.78" y="556.5" width="36.48" height="12" fill="#373a4b" fill-opacity="0.85"/>
<rect x="694.78" y="569.2" width="36.48" height="114.3" fill="#2859cc" fill-opacity="0.85"/>
<rect x="732.46" y="556.7" width="36.48" height="11.8" fill="#373a4b" fill-opacity="0.85"/>
<rect x="732.46" y="569.2" width="36.48" height="114.3" fill="#2859cc" fill-opacity="0.85"/>
<rect x="770.14" y="556.5" width="36.48" height="12" fill="#373a4b" fill-opacity="0.85"/>
<rect x="770.14" y="569.2" width="36.48" height="114.3" fill="#2859cc" fill-opacity="0.85"/>
<rect x="807.82" y="557.8" width="36.48" height="11.7" fill="#373a4b" fill-opacity="0.85"/>
<rect x="807.82" y="570.2" width="36.48" height="113.3" fill="#2859cc" fill-opacity="0.85"/>
<rect x="845.5" y="580.3" width="36.48" height="1.3" fill="#c4974a"/>
<rect x="845.5" y="581.6" width="36.48" height="1" fill="#f3e3cf"/>
<rect x="845.5" y="582.6" width="36.48" height="1.2" fill="#f08fc4"/>
<rect x="845.5" y="583.8" width="36.48" height="1.2" fill="#e9e0e6"/>
<rect x="845.5" y="585" width="36.48" height="7.8" fill="#373a4b" fill-opacity="0.85"/>
<rect x="845.5" y="593.5" width="36.48" height="90" fill="#2859cc" fill-opacity="0.85"/>
<rect x="883.18" y="579.8" width="36.48" height="1.4" fill="#c4974a"/>
<rect x="883.18" y="581.2" width="36.48" height="1" fill="#f3e3cf"/>
<rect x="883.18" y="582.2" width="36.48" height="1.3" fill="#f08fc4"/>
<rect x="883.18" y="583.5" width="36.48" height="1.1" fill="#efd9e6"/>
<rect x="883.18" y="584.6" width="36.48" height="1" fill="#7fb096"/>
<rect x="883.18" y="585.6" width="36.48" height="0.9" fill="#9a9aa8"/>
<rect x="883.18" y="586.5" width="36.48" height="10.2" fill="#373a4b" fill-opacity="0.85"/>
<rect x="883.18" y="597.4" width="36.48" height="86.1" fill="#2859cc" fill-opacity="0.85"/>
<rect x="920.86" y="665.4" width="36.48" height="1.8" fill="#c99a55"/>
<rect x="920.86" y="667.2" width="36.48" height="16.3" fill="#2859cc" fill-opacity="0.85"/>
<line x1="130" x2="958" y1="683.5" y2="683.5" stroke="#2f55c4" stroke-width="1"/>
</svg>
<svg class="plot" width="1920" height="1080" viewBox="0 0 1920 1080">
<line x1="98" x2="958.5" y1="816.3" y2="816.3" stroke="#dcdcea" stroke-width="1"/>
<line x1="98" x2="958.5" y1="862.5" y2="862.5" stroke="#dcdcea" stroke-width="1"/>
<line x1="98" x2="958.5" y1="908.3" y2="908.3" stroke="#dcdcea" stroke-width="1"/>
<line x1="248" x2="248" y1="816" y2="955" stroke="#dcdcea" stroke-width="1"/>
<line x1="435" x2="435" y1="816" y2="955" stroke="#dcdcea" stroke-width="1"/>
<line x1="622" x2="622" y1="816" y2="955" stroke="#dcdcea" stroke-width="1"/>
<line x1="809.2" x2="809.2" y1="816" y2="955" stroke="#dcdcea" stroke-width="1"/>
<line x1="98" x2="98" y1="816" y2="955.5" stroke="#8b8cad" stroke-width="1"/>
<line x1="97.5" x2="958.5" y1="955" y2="955" stroke="#8b8cad" stroke-width="1"/>
<text x="92" y="825" text-anchor="end" class="ax">30K</text>
<text x="92" y="866.5" text-anchor="end" class="ax">20K</text>
<text x="92" y="912.5" text-anchor="end" class="ax">10K</text>
<text x="92" y="954.5" text-anchor="end" class="ax">0</text>
<text x="248.8" y="969.5" text-anchor="start" class="ax">16:05</text>
<text x="435" y="969.5" text-anchor="middle" class="ax">16:10</text>
<text x="622" y="969.5" text-anchor="middle" class="ax">16:15</text>
<text x="808.8" y="969.5" text-anchor="end" class="ax">16:20</text>
<path d="M107.5 961.8 L104.1 965 L107.5 968.2 M104.3 965 H111.5" fill="none" stroke="#34365f" stroke-width="1.3" stroke-linecap="round" stroke-linejoin="round"/>
<path d="M949 961.8 L952.4 965 L949 968.2 M952.2 965 H945" fill="none" stroke="#34365f" stroke-width="1.3" stroke-linecap="round" stroke-linejoin="round"/>
<line x1="116.5" x2="939.52" y1="955.5" y2="955.5" stroke="#7da75c" stroke-width="1.5"/>
<circle cx="116.5" cy="955.5" r="2.8" fill="#5e9b34"/>
<circle cx="153.91" cy="955.5" r="2.8" fill="#5e9b34"/>
<circle cx="191.32" cy="955.5" r="2.8" fill="#5e9b34"/>
<circle cx="228.73" cy="955.5" r="2.8" fill="#5e9b34"/>
<circle cx="266.14" cy="955.5" r="2.8" fill="#5e9b34"/>
<circle cx="303.55" cy="955.5" r="2.8" fill="#5e9b34"/>
<circle cx="340.96" cy="955.5" r="2.8" fill="#5e9b34"/>
<circle cx="378.37" cy="955.5" r="2.8" fill="#5e9b34"/>
<circle cx="415.78" cy="955.5" r="2.8" fill="#5e9b34"/>
<circle cx="453.19" cy="955.5" r="2.8" fill="#5e9b34"/>
<circle cx="490.6" cy="955.5" r="2.8" fill="#5e9b34"/>
<circle cx="528.01" cy="955.5" r="2.8" fill="#5e9b34"/>
<circle cx="565.42" cy="955.5" r="2.8" fill="#5e9b34"/>
<circle cx="602.83" cy="955.5" r="2.8" fill="#5e9b34"/>
<circle cx="640.24" cy="955.5" r="2.8" fill="#5e9b34"/>
<circle cx="677.65" cy="955.5" r="2.8" fill="#5e9b34"/>
<circle cx="715.06" cy="955.5" r="2.8" fill="#5e9b34"/>
<circle cx="752.47" cy="955.5" r="2.8" fill="#5e9b34"/>
<circle cx="789.88" cy="955.5" r="2.8" fill="#5e9b34"/>
<circle cx="827.29" cy="955.5" r="2.8" fill="#5e9b34"/>
<circle cx="864.7" cy="955.5" r="2.8" fill="#5e9b34"/>
<circle cx="902.11" cy="955.5" r="2.8" fill="#5e9b34"/>
<circle cx="939.52" cy="955.5" r="2.8" fill="#5e9b34"/>
<polyline fill="none" stroke="#b00a2e" stroke-width="1.8" stroke-linejoin="round" points="116.5,940.25 153.91,939.25 191.32,950.5 228.73,938.75 266.14,941 303.55,938.75 340.96,943.5 378.37,948.5 415.78,940.5 453.19,939.25 490.6,943.25 528.01,950.25 565.42,940 602.83,942 640.24,950 677.65,949.5 715.06,948.5 752.47,950 789.88,949.75 827.29,920 864.7,820 902.11,820.75 939.52,820"/>
<circle cx="116.5" cy="940.25" r="2.8" fill="#b00a2e"/>
<circle cx="153.91" cy="939.25" r="2.8" fill="#b00a2e"/>
<circle cx="191.32" cy="950.5" r="2.8" fill="#b00a2e"/>
<circle cx="228.73" cy="938.75" r="2.8" fill="#b00a2e"/>
<circle cx="266.14" cy="941" r="2.8" fill="#b00a2e"/>
<circle cx="303.55" cy="938.75" r="2.8" fill="#b00a2e"/>
<circle cx="340.96" cy="943.5" r="2.8" fill="#b00a2e"/>
<circle cx="378.37" cy="948.5" r="2.8" fill="#b00a2e"/>
<circle cx="415.78" cy="940.5" r="2.8" fill="#b00a2e"/>
<circle cx="453.19" cy="939.25" r="2.8" fill="#b00a2e"/>
<circle cx="490.6" cy="943.25" r="2.8" fill="#b00a2e"/>
<circle cx="528.01" cy="950.25" r="2.8" fill="#b00a2e"/>
<circle cx="565.42" cy="940" r="2.8" fill="#b00a2e"/>
<circle cx="602.83" cy="942" r="2.8" fill="#b00a2e"/>
<circle cx="640.24" cy="950" r="2.8" fill="#b00a2e"/>
<circle cx="677.65" cy="949.5" r="2.8" fill="#b00a2e"/>
<circle cx="715.06" cy="948.5" r="2.8" fill="#b00a2e"/>
<circle cx="752.47" cy="950" r="2.8" fill="#b00a2e"/>
<circle cx="789.88" cy="949.75" r="2.8" fill="#b00a2e"/>
<circle cx="827.29" cy="920" r="2.8" fill="#b00a2e"/>
<circle cx="864.7" cy="820" r="2.8" fill="#b00a2e"/>
<circle cx="902.11" cy="820.75" r="2.8" fill="#b00a2e"/>
<circle cx="939.52" cy="820" r="2.8" fill="#b00a2e"/>
</svg>
<svg class="plot" width="1920" height="1080" viewBox="0 0 1920 1080">
<circle cx="1438.6" cy="350" r="82.8" fill="#7ba558"/>
<path d="M1438.6 350 L1438.6 267.2 A82.8 82.8 0 0 1 1442.36 267.29 Z" fill="#c3203f" stroke="#e9efe2" stroke-width="0.8" stroke-linejoin="round"/>
<circle cx="1438.6" cy="350" r="0.8" fill="#f4f4f4"/>
</svg>
<svg class="plot" width="1920" height="1080" viewBox="0 0 1920 1080">
<circle cx="1438.6" cy="621" r="82.8" fill="#3c68d2"/>
<path d="M1438.6 621 L1384.83 558.04 A82.8 82.8 0 0 1 1432.1 538.46 Z" fill="#4c4e5e" stroke="#f1f1f4" stroke-width="0.8" stroke-linejoin="round"/>
<path d="M1438.6 621 L1432.1 538.46 A82.8 82.8 0 0 1 1434.56 538.3 Z" fill="#e8e2e8"/>
<path d="M1438.6 621 L1434.56 538.3 A82.8 82.8 0 0 1 1436.14 538.24 Z" fill="#f3a6c6"/>
<path d="M1438.6 621 L1436.14 538.24 A82.8 82.8 0 0 1 1438.6 538.2 Z" fill="#d9a25e"/>
</svg>
</div>
<!-- bottom band + floating shadow + white bars -->
<div class="abs" style="left:47px;top:1015.5px;width:1873px;height:12px;background:#f9f9fa;border-radius:0 0 0 8px"></div>
<div class="abs" style="left:47px;top:940px;width:1873px;height:87.5px;overflow:hidden;border-radius:0 0 0 8px">
  <div class="abs" style="left:480px;top:104px;width:930px;height:60px;border-radius:30px;box-shadow:0 0 46px 18px rgba(20,20,30,0.21)"></div>
</div>
<div class="abs" style="left:0;top:1027.5px;width:1920px;height:52.5px;background:#fff"></div>
<div class="abs" style="left:0;top:0;width:1920px;height:56px;background:#fff"></div>
</div>
</body></html>
